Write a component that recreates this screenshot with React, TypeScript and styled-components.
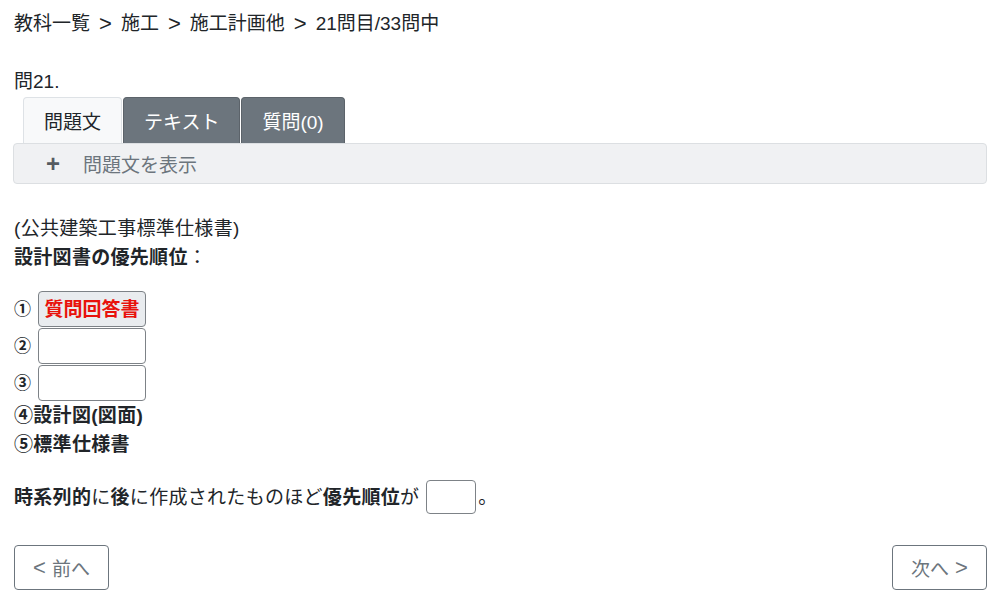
import styled, { createGlobalStyle } from 'styled-components';

const GlobalStyle = createGlobalStyle`
  html, body {
    margin: 0;
    padding: 0;
    background: #fff;
  }
  body {
    font-family: "Liberation Sans", "Noto Sans CJK JP", sans-serif;
    color: #212529;
  }
`;

const Page = styled.div`
  padding: 10px 13px 0 14px;
  width: 1000px;
  box-sizing: border-box;
`;

const Breadcrumb = styled.div`
  font-size: 19px;
  line-height: 28px;
  display: flex;
  align-items: center;
  gap: 9px;
`;

const Sep = styled.span`
  font-size: 22px;
`;

const QuestionNo = styled.div`
  margin-top: 32px;
  font-size: 19px;
  line-height: 24px;
`;

const TabList = styled.div`
  display: flex;
  margin-left: 9px;
  margin-top: 3px;
  gap: 1px;
`;

const Tab = styled.div<{ $active?: boolean }>`
  height: 46px;
  box-sizing: border-box;
  display: flex;
  align-items: center;
  justify-content: center;
  font-size: 19px;
  border: 1px solid ${({ $active }) => ($active ? '#dee2e6' : '#5c636a')};
  border-bottom: none;
  border-radius: 4px 4px 0 0;
  background: ${({ $active }) => ($active ? '#f8f9fa' : '#6c757d')};
  color: ${({ $active }) => ($active ? '#212529' : '#fff')};
  padding: 0 20px;
`;

const Accordion = styled.div`
  margin-left: -1px;
  height: 41px;
  box-sizing: border-box;
  border: 1px solid #dcdfe2;
  border-radius: 4px;
  background: #f0f1f3;
  display: flex;
  align-items: center;
  padding-left: 32px;
  gap: 23px;
  color: #6c757d;
  font-size: 19px;
`;

const Plus = styled.span`
  font-size: 24px;
  font-weight: bold;
  color: #555b61;
  line-height: 1;
`;

const Content = styled.div`
  margin-top: 30px;
  font-size: 19px;
  line-height: 29px;
  letter-spacing: 0.3px;
`;

const Bold = styled.span`
  font-weight: bold;
`;

const BlankGap = styled.div`
  height: 19px;
`;

const Order = styled.div`
  display: flex;
  flex-direction: column;
  gap: 1px;
`;

const OrderRow = styled.div`
  display: flex;
  align-items: center;
  gap: 6px;
  height: 36px;
`;

const Circled = styled.span`
  font-weight: bold;
  font-size: 17px;
  width: 18px;
`;

const AnswerBox = styled.div<{ $filled?: boolean }>`
  width: 108px;
  height: 36px;
  box-sizing: border-box;
  border: 1px solid #7d8287;
  border-radius: 4px;
  background: ${({ $filled }) => ($filled ? '#e9ecef' : '#fff')};
  color: #e8120c;
  font-weight: bold;
  font-size: 19px;
  letter-spacing: 0;
  display: flex;
  align-items: center;
  justify-content: center;
`;

const Sentence = styled.div`
  margin-top: 21px;
  display: flex;
  align-items: center;
  font-size: 19px;
`;

const InlineBox = styled.span`
  display: inline-block;
  width: 50px;
  height: 34px;
  box-sizing: border-box;
  border: 1px solid #7d8287;
  border-radius: 4px;
  margin: 0 2px 0 7px;
`;

const NavRow = styled.div`
  display: flex;
  justify-content: space-between;
  margin-top: 31px;
`;

const NavButton = styled.button`
  width: 95px;
  height: 45px;
  box-sizing: border-box;
  border: 1px solid #6c757d;
  border-radius: 4px;
  background: #fff;
  color: #6c757d;
  font-family: "Liberation Sans", "Noto Sans CJK JP", sans-serif;
  font-size: 19px;
  display: flex;
  align-items: center;
  justify-content: center;
  gap: 6px;
  padding: 0;
`;

const Chevron = styled.span`
  font-size: 22px;
`;

export default function App() {
  return (
    <>
      <GlobalStyle />
      <Page>
        <Breadcrumb>
          <span>教科一覧</span>
          <Sep>&gt;</Sep>
          <span>施工</span>
          <Sep>&gt;</Sep>
          <span>施工計画他</span>
          <Sep>&gt;</Sep>
          <span>21問目/33問中</span>
        </Breadcrumb>
        <QuestionNo>問21.</QuestionNo>
        <TabList>
          <Tab $active>問題文</Tab>
          <Tab>テキスト</Tab>
          <Tab>質問(0)</Tab>
        </TabList>
        <Accordion>
          <Plus>+</Plus>
          <span>問題文を表示</span>
        </Accordion>
        <Content>
          <div>(公共建築工事標準仕様書)</div>
          <div>
            <Bold>設計図書の優先順位</Bold>：
          </div>
          <BlankGap />
          <Order>
            <OrderRow>
              <Circled>①</Circled>
              <AnswerBox $filled>質問回答書</AnswerBox>
            </OrderRow>
            <OrderRow>
              <Circled>②</Circled>
              <AnswerBox />
            </OrderRow>
            <OrderRow>
              <Circled>③</Circled>
              <AnswerBox />
            </OrderRow>
          </Order>
          <div>
            <Bold>④設計図(図面)</Bold>
          </div>
          <div>
            <Bold>⑤標準仕様書</Bold>
          </div>
          <Sentence>
            <Bold>時系列的</Bold>に<Bold>後</Bold>に作成されたものほど<Bold>優先順位</Bold>が
            <InlineBox />。
          </Sentence>
        </Content>
        <NavRow>
          <NavButton>
            <Chevron>&lt;</Chevron>
            <span>前へ</span>
          </NavButton>
          <NavButton>
            <span>次へ</span>
            <Chevron>&gt;</Chevron>
          </NavButton>
        </NavRow>
      </Page>
    </>
  );
}
